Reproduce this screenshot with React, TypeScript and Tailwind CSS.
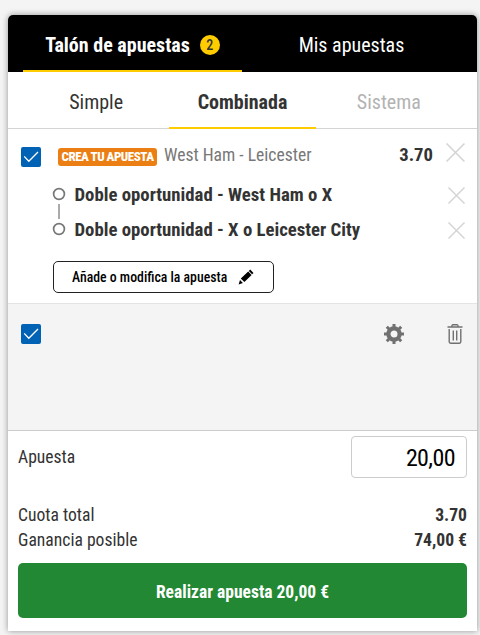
import { ReactNode } from "react";

const selections = ["Doble oportunidad - West Ham o X", "Doble oportunidad - X o Leicester City"];

function Check() {
  return (
    <div className="flex h-5 w-5 shrink-0 items-center justify-center rounded-xs bg-[#0062b4]">
      <svg className="h-5 w-5" viewBox="0 0 20 20" fill="none" stroke="#fff" strokeWidth="1.3">
        <path d="M3.2 9.4 L7.8 14.2 L17 5" />
      </svg>
    </div>
  );
}

function Cross({ className }: { className: string }) {
  return (
    <svg className={className} viewBox="0 0 18 18" fill="none" stroke="#d4d4d4" strokeWidth="1.5">
      <path d="M0.5 0.5 L17.5 17.5 M17.5 0.5 L0.5 17.5" />
    </svg>
  );
}

function Tab({ children, className }: { children: ReactNode; className: string }) {
  return <div className={`flex flex-1 basis-0 items-center justify-center ${className}`}>{children}</div>;
}

export default function App() {
  return (
    <div className="h-[635px] w-[480px] overflow-hidden bg-[#f4f4f4] pt-[15px] pl-2 font-['Roboto_Condensed','Roboto',sans-serif] font-stretch-condensed text-[#333]">
      <div className="flex h-[616px] w-[469px] flex-col overflow-hidden rounded-t-[5px] bg-white shadow-[0_0_6px_rgba(0,0,0,0.4)]">
        <div className="flex h-[57px] bg-black px-[15px] text-xl text-white">
          <Tab className="border-b-2 border-[#ffcc00] pt-1 font-bold">
            Talón de apuestas
            <span className="ml-2.5 flex h-5 w-5 items-center justify-center rounded-full bg-[#ffcc00] text-sm font-medium text-[#333]">
              2
            </span>
          </Tab>
          <Tab className="border-b-2 border-transparent pt-1 pr-px font-[450]">Mis apuestas</Tab>
        </div>

        <div className="h-[57px] bg-[linear-gradient(#d4d4d4,#d4d4d4)] bg-size-[100%_1px] bg-bottom bg-no-repeat px-[15px]">
          <div className="flex h-full text-xl">
            <Tab className="border-b-2 border-transparent pt-1">Simple</Tab>
            <Tab className="border-b-2 border-[#ffcc00] pt-1 font-bold">Combinada</Tab>
            <Tab className="border-b-2 border-transparent pt-1 font-[450] text-[#b3b3b3]">Sistema</Tab>
          </div>
        </div>

        <div className="h-[175px] border-b border-[#e4e4e4] px-[13px]">
          <div className="flex h-12 items-center pt-1">
            <div className="pt-1">
              <Check />
            </div>
            <span className="mt-1 ml-[17px] flex h-[18px] w-[99px] items-center justify-center rounded-[3px] bg-[#ec7f13] text-[13px] font-extrabold tracking-[-0.5px] whitespace-nowrap text-white">
              CREA TU APUESTA
            </span>
            <span className="ml-[7px] text-[17.6px] text-[#777]">West Ham - Leicester</span>
            <span className="mr-[13px] ml-auto text-[18.7px] font-bold">3.70</span>
            <Cross className="-mr-px mb-[5px] h-[19px] w-[19px]" />
          </div>

          <div className="relative">
            {selections.map((name) => (
              <div key={name} className="flex h-[35px] items-center pl-[31px]">
                <svg className="mb-px h-[14px] w-[14px]" viewBox="0 0 14 14" fill="none" stroke="#777" strokeWidth="1.7">
                  <circle cx="7" cy="7" r="5.4" />
                </svg>
                <span className="ml-2 pt-0.5 pl-[0.5px] text-[18.75px] font-bold">{name}</span>
                <Cross className="mt-px -mr-px ml-auto h-[17px] w-[17px]" />
              </div>
            ))}
            <div className="absolute top-[27px] left-[37px] h-[15px] w-0.5 bg-[#aaa]" />
          </div>

          <button className="mt-[14px] ml-8 flex h-8 w-[221px] items-center rounded-[5px] border border-[#222] pl-[18px] text-[13.8px] font-medium text-black">
            Añade o modifica la apuesta
            <svg className="ml-[11px] h-4 w-4" viewBox="0 0 16 16" fill="#000">
              <path d="M12.2 0.6 L15.5 3.9 L14.1 5.3 L10.8 2 Z M10.2 2.5 L13.6 5.9 L6.4 13.1 L2.8 9.6 Z M2 11 L4.9 13.9 L0.6 15.4 Z" />
            </svg>
          </button>
        </div>

        <div className="flex h-[127px] items-start border-b border-[#ccc] bg-[#f4f4f4] pt-5 pr-3.5 pl-[13px]">
          <Check />
          <svg className="ml-auto h-5 w-5" viewBox="0 0 20 20" fill="none" stroke="#707070">
            <circle cx="10" cy="10" r="5.6" strokeWidth="4.2" />
            <path
              strokeWidth="3"
              d="M10 0 V3 M10 17 V20 M0 10 H3 M17 10 H20 M2.8 2.8 L5 5 M15 15 L17.2 17.2 M17.2 2.8 L15 5 M5 15 L2.8 17.2"
            />
          </svg>
          <svg className="ml-[43px] h-5 w-4" viewBox="0 0 16 20" fill="none" stroke="#707070" strokeWidth="1.4">
            <path d="M0.5 3 H15.5 M4.8 2.8 Q4.8 0.8 6 0.8 H10 Q11.2 0.8 11.2 2.8 M2.2 5 V17.8 Q2.2 19.2 3.6 19.2 H12.4 Q13.8 19.2 13.8 17.8 V5" />
            <path d="M6.3 6.5 V16.5 M9.7 6.5 V16.5" />
          </svg>
        </div>

        <div className="px-2.5 text-[17.6px]">
          <div className="mt-[5px] flex h-[42px] items-center justify-between">
            <span>Apuesta</span>
            <div className="flex h-full w-[116px] items-center justify-end rounded-[4px] border border-[#ccc] pt-0.5 pr-[11px] text-2xl tracking-[-0.6px] text-black">
              20,00
            </div>
          </div>
          <div className="mt-6 flex h-[25px] items-center justify-between pt-0.5">
            <span>Cuota total</span>
            <span className="font-bold">3.70</span>
          </div>
          <div className="flex h-[25px] items-center justify-between pt-0.5">
            <span>Ganancia posible</span>
            <span className="font-bold">74,00 €</span>
          </div>
          <button className="mt-[11px] flex h-[55px] w-full items-center justify-center rounded-[5px] bg-[#228833] pt-1 text-[17.5px] font-bold text-white">
            Realizar apuesta 20,00 €
          </button>
        </div>
      </div>
    </div>
  );
}
